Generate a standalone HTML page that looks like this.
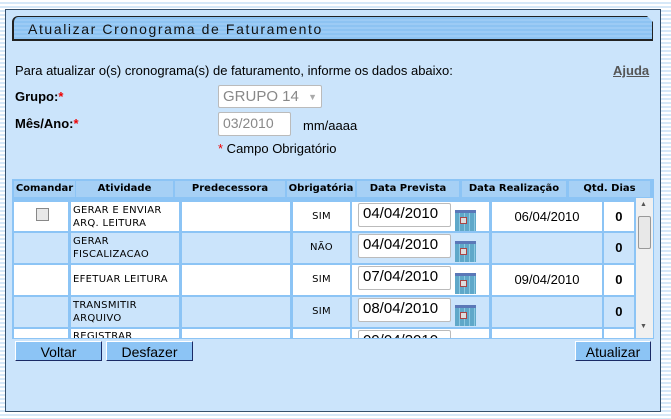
<!DOCTYPE html><html><head><style>
body{margin:0;width:671px;height:419px;overflow:hidden;font-family:"Liberation Sans",sans-serif;background:repeating-linear-gradient(#fff 0 2px,#d6e8f8 2px 4px);position:relative}
.a{position:absolute}
#p{left:5px;top:9px;width:654px;height:401px;background:#cbe4fb;border:1px solid #34506c}
#t{left:12px;top:16px;height:25px;background:repeating-linear-gradient(#8dc3f2 0 2px,#9ccbf5 2px 4px);border:1px solid #222;border-left-width:2px;border-bottom-width:2px;border-radius:6px 0 0 0;font-size:14px;letter-spacing:1.6px;color:#111;line-height:25px;padding-left:14px;box-sizing:border-box;width:641px;clip-path:polygon(0 0,635px 0,641px 6px,641px 100%,0 100%)}
.s{font-size:13px;color:#000}
.b{font-weight:bold}
.r{color:#e00}
.h{top:181px;height:16px;background:#a6d0f5;font:bold 10px "DejaVu Sans",sans-serif;text-align:center;line-height:16px}
.c{background:#fff;font:10px "DejaVu Sans",sans-serif;letter-spacing:.3px}
.alt{background:#cbe4fb}
.in{background:#fff;border:1px solid #bbb;border-radius:2px;font-family:"Liberation Sans",sans-serif;font-size:15px;padding-left:4px;box-sizing:border-box;line-height:20px;letter-spacing:0}
.ic{width:21px;height:21px;background:repeating-linear-gradient(90deg,#5fa8c9 0 4px,#8cc8e0 4px 5px);border-top:3px solid #5b78b8;box-sizing:border-box}
.ic:after{content:"";position:absolute;left:5px;top:4px;width:5px;height:5px;border:1px solid #a44;background:#ddd}
.btn{top:341px;height:20px;background:#8cc4f5;border:1px solid #1a2a66;border-top-color:#fff;border-left-color:#fff;font-size:14px;text-align:center;line-height:20px;box-sizing:border-box}
.dr{text-align:center;font-family:"Liberation Sans",sans-serif;font-size:13px;line-height:29px;letter-spacing:0}
.q{text-align:center;font-family:"Liberation Sans",sans-serif;font-size:13px;font-weight:bold;line-height:30px}
</style></head><body>
<div class="a" id="p"></div>
<div class="a" id="t">Atualizar Cronograma de Faturamento</div>
<div class="a s" style="left:15px;top:63px">Para atualizar o(s) cronograma(s) de faturamento, informe os dados abaixo:</div>
<div class="a s b" style="left:613px;top:63px;color:#555;text-decoration:underline">Ajuda</div>
<div class="a s b" style="left:15px;top:89px">Grupo:<span class="r">*</span></div>
<div class="a s b" style="left:15px;top:116px">Mês/Ano:<span class="r">*</span></div>
<div class="a in" style="left:218px;top:85px;width:104px;height:23px;color:#888;font-size:15px;line-height:21px">GRUPO 14 <span style="font-size:9px;color:#aaa;position:absolute;right:4px;top:1px">▼</span></div>
<div class="a in" style="left:218px;top:112px;width:73px;height:24px;color:#888;font-size:14px">03/2010</div>
<div class="a s" style="left:303px;top:118px">mm/aaaa</div>
<div class="a s" style="left:218px;top:141px"><span class="r">*</span> Campo Obrigatório</div>
<div class="a" style="left:12px;top:179px;width:642px;height:160px;background:#8cc4f5"></div>
<div class="a h" style="left:14px;width:61px">Comandar</div>
<div class="a h" style="left:76px;width:97px">Atividade</div>
<div class="a h" style="left:175px;width:110px">Predecessora</div>
<div class="a h" style="left:287px;width:68px">Obrigatória</div>
<div class="a h" style="left:357px;width:102px">Data Prevista</div>
<div class="a h" style="left:462px;width:104px">Data Realização</div>
<div class="a h" style="left:569px;width:81px">Qtd. Dias</div>
<div class="a" style="left:14px;top:198px;width:639px;height:140px;overflow:hidden">
<div style="position:relative">
<div class="a c" style="left:0;top:4px;width:54px;height:29px"><div class="a" style="left:22px;top:6px;width:11px;height:11px;border:1px solid #888;background:#e8e8e8"></div></div>
<div class="a c" style="left:57px;top:4px;width:108px;height:29px;padding:2px 0 0 2px;box-sizing:border-box;line-height:13px">GERAR E ENVIAR<br>ARQ. LEITURA</div>
<div class="a c" style="left:168px;top:4px;width:108px;height:29px"></div>
<div class="a c" style="left:279px;top:4px;width:57px;height:29px;text-align:center;line-height:29px">SIM</div>
<div class="a c" style="left:338px;top:4px;width:137px;height:29px"><div class="a in" style="left:6px;top:1px;width:93px;height:24px">04/04/2010</div><div class="a ic" style="left:103px;top:8px"></div></div>
<div class="a c dr" style="left:478px;top:4px;width:110px;height:29px">06/04/2010</div>
<div class="a c q" style="left:590px;top:4px;width:30px;height:29px">0</div>

<div class="a c alt" style="left:0;top:35px;width:54px;height:30px"></div>
<div class="a c alt" style="left:57px;top:35px;width:108px;height:30px;padding:2px 0 0 2px;box-sizing:border-box;line-height:13px">GERAR<br>FISCALIZACAO</div>
<div class="a c alt" style="left:168px;top:35px;width:108px;height:30px"></div>
<div class="a c alt" style="left:279px;top:35px;width:57px;height:30px;text-align:center;line-height:30px">NÃO</div>
<div class="a c alt" style="left:338px;top:35px;width:137px;height:30px"><div class="a in" style="left:6px;top:1px;width:93px;height:24px">04/04/2010</div><div class="a ic" style="left:103px;top:8px"></div></div>
<div class="a c alt" style="left:478px;top:35px;width:110px;height:30px"></div>
<div class="a c alt q" style="left:590px;top:35px;width:30px;height:30px">0</div>

<div class="a c" style="left:0;top:67px;width:54px;height:30px"></div>
<div class="a c" style="left:57px;top:67px;width:108px;height:30px;padding-left:2px;box-sizing:border-box;line-height:30px">EFETUAR LEITURA</div>
<div class="a c" style="left:168px;top:67px;width:108px;height:30px"></div>
<div class="a c" style="left:279px;top:67px;width:57px;height:30px;text-align:center;line-height:30px">SIM</div>
<div class="a c" style="left:338px;top:67px;width:137px;height:30px"><div class="a in" style="left:6px;top:1px;width:93px;height:24px">07/04/2010</div><div class="a ic" style="left:103px;top:8px"></div></div>
<div class="a c dr" style="left:478px;top:67px;width:110px;height:30px;line-height:30px">09/04/2010</div>
<div class="a c q" style="left:590px;top:67px;width:30px;height:30px">0</div>

<div class="a c alt" style="left:0;top:99px;width:54px;height:30px"></div>
<div class="a c alt" style="left:57px;top:99px;width:108px;height:30px;padding:2px 0 0 2px;box-sizing:border-box;line-height:13px">TRANSMITIR<br>ARQUIVO</div>
<div class="a c alt" style="left:168px;top:99px;width:108px;height:30px"></div>
<div class="a c alt" style="left:279px;top:99px;width:57px;height:30px;text-align:center;line-height:30px">SIM</div>
<div class="a c alt" style="left:338px;top:99px;width:137px;height:30px"><div class="a in" style="left:6px;top:1px;width:93px;height:24px">08/04/2010</div><div class="a ic" style="left:103px;top:8px"></div></div>
<div class="a c alt" style="left:478px;top:99px;width:110px;height:30px"></div>
<div class="a c alt q" style="left:590px;top:99px;width:30px;height:30px">0</div>

<div class="a c" style="left:0;top:131px;width:54px;height:30px"></div>
<div class="a c" style="left:57px;top:131px;width:108px;height:30px;padding:2px 0 0 2px;box-sizing:border-box">REGISTRAR</div>
<div class="a c" style="left:168px;top:131px;width:108px;height:30px"></div>
<div class="a c" style="left:279px;top:131px;width:57px;height:30px"></div>
<div class="a c" style="left:338px;top:131px;width:137px;height:30px"><div class="a in" style="left:6px;top:1px;width:93px;height:24px">09/04/2010</div></div>
<div class="a c" style="left:478px;top:131px;width:110px;height:30px"></div>
<div class="a c" style="left:590px;top:131px;width:30px;height:30px"></div>
<div class="a" style="left:622px;top:0;width:17px;height:140px;background:#f0f0f0"></div>
<div class="a" style="left:624px;top:18px;width:13px;height:33px;background:#e8e8e8;border:1px solid #999;border-radius:2px;box-sizing:border-box"></div>
<div class="a" style="left:626px;top:3px;font-size:7px;color:#555">▲</div>
<div class="a" style="left:626px;top:125px;font-size:7px;color:#555">▼</div>
</div></div>
<div class="a btn" style="left:15px;width:87px">Voltar</div>
<div class="a btn" style="left:106px;width:87px">Desfazer</div>
<div class="a btn" style="left:575px;width:76px">Atualizar</div>
</body></html>
